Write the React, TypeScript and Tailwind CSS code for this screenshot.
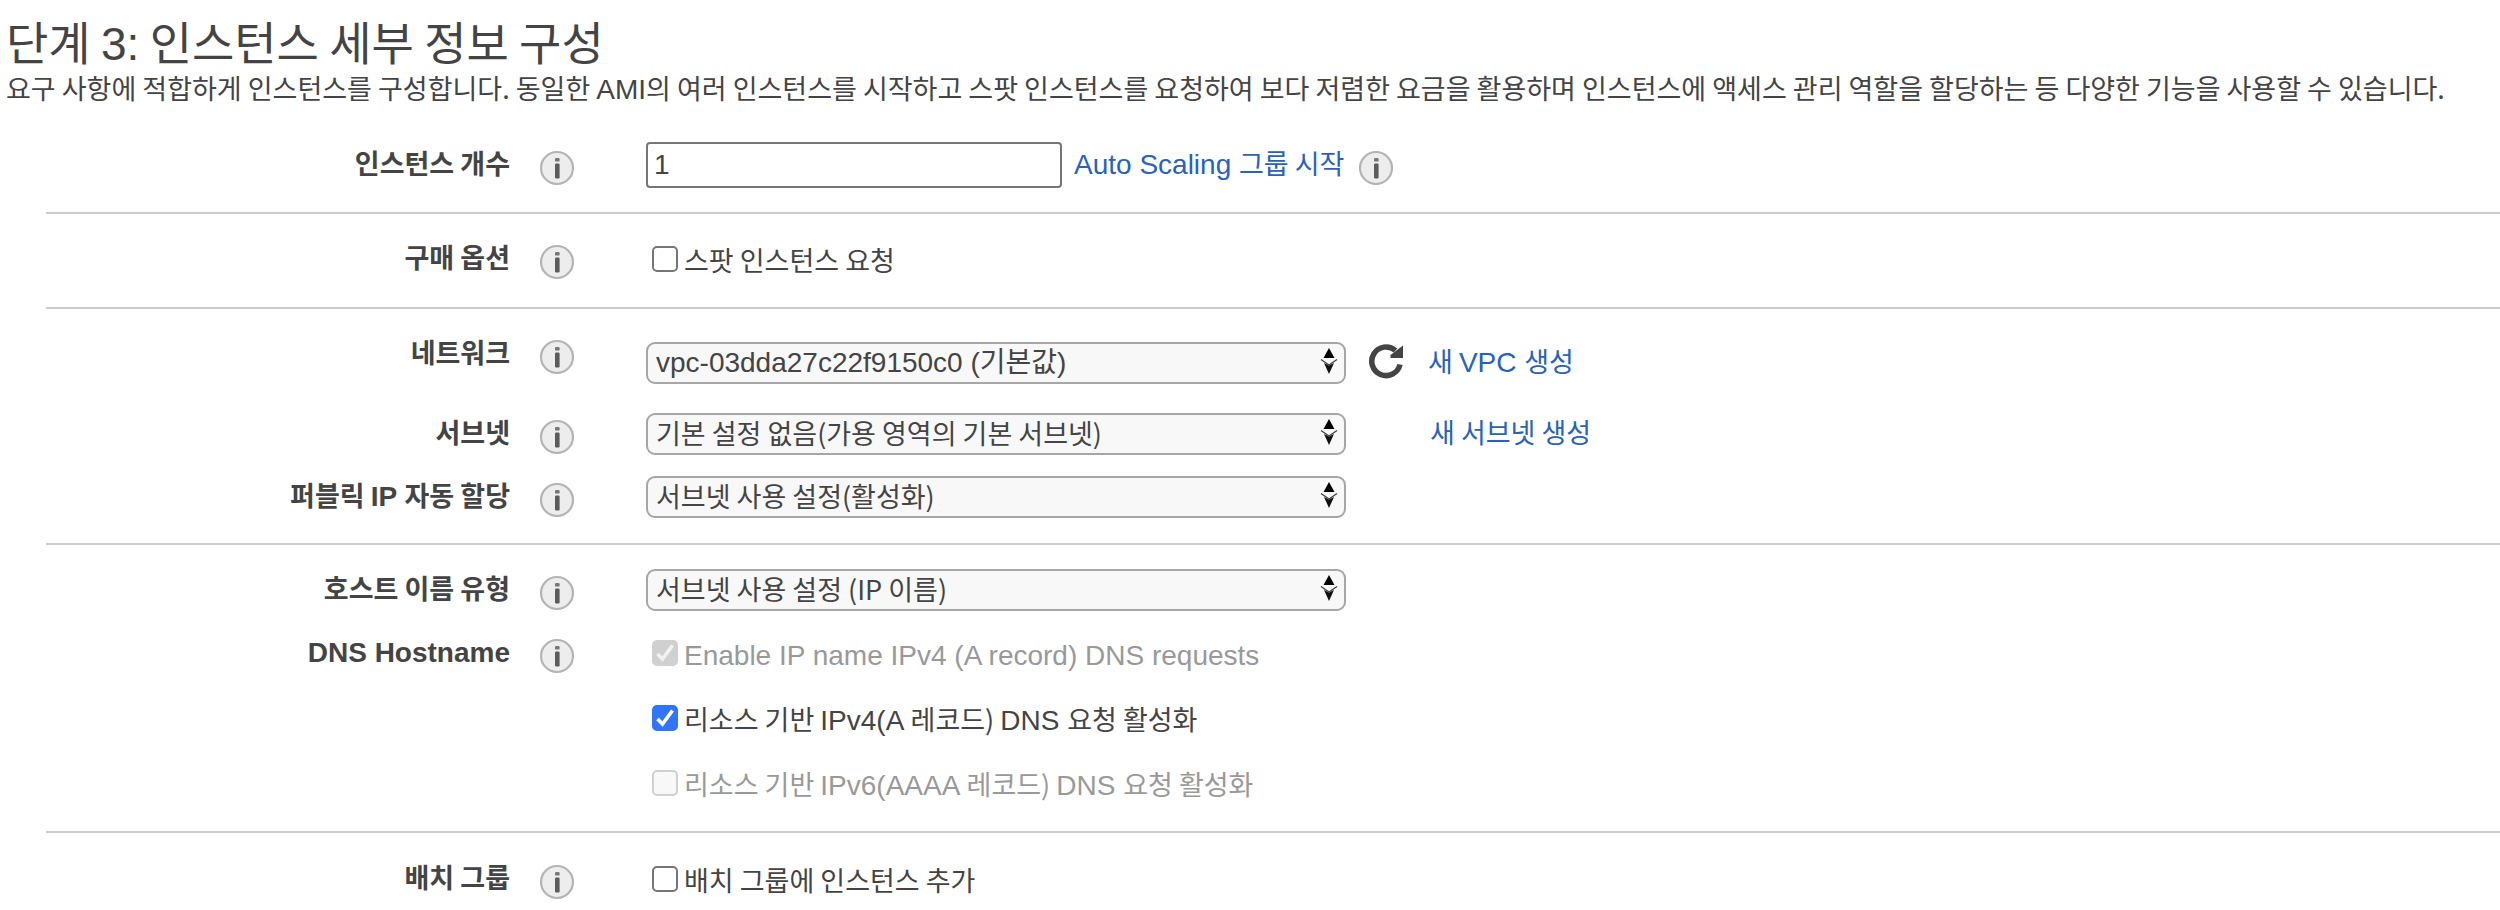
import { useState, type ReactNode } from "react";
import { clsx } from "clsx";

export default function App() {
  return (
    <main className="min-h-screen overflow-x-hidden bg-white text-[27px] leading-9 text-[#444] font-['Noto_Sans_CJK_KR','Liberation_Sans',sans-serif]">
      <header className="px-1.5 pt-2.5">
        <h1 className="text-[46px] leading-[60px]">
          단계 <span className="font-['Liberation_Sans',sans-serif] leading-none">3:</span> 인스턴스 세부 정보 구성
        </h1>
        <p>
          <Mixed text="요구 사항에 적합하게 인스턴스를 구성합니다. 동일한 AMI의 여러 인스턴스를 시작하고 스팟 인스턴스를 요청하여 보다 저렴한 요금을 활용하며 인스턴스에 액세스 관리 역할을 할당하는 등 다양한 기능을 사용할 수 있습니다." />
        </p>
      </header>
      <InstanceForm />
    </main>
  );
}

function InstanceForm() {
  const [count, setCount] = useState("1");

  return (
    <form className="ml-[46px]" onSubmit={(e) => e.preventDefault()}>
      <section className="border-b-2 border-[#ccc] pt-9 pb-6">
        <Row label="인스턴스 개수" htmlFor="count">
          <input
            id="count"
            type="text"
            value={count}
            onChange={(e) => setCount(e.target.value)}
            className="h-[46px] w-[416px] rounded-[4px] border-2 border-[#767676] bg-white px-1.5 text-[28px] font-['Liberation_Sans',sans-serif]"
          />
          <Link text="Auto Scaling 그룹 시작" className="ml-3" />
          <InfoButton label="Auto Scaling 그룹 시작" className="ml-[14px]" />
        </Row>
      </section>

      <section className="border-b-2 border-[#ccc] pt-6 pb-[27px]">
        <Row label="구매 옵션">
          <Checkbox id="spot" label="스팟 인스턴스 요청" />
        </Row>
      </section>

      <section className="border-b-2 border-[#ccc] pt-[15px] pb-[25px]">
        <Row label="네트워크" htmlFor="network">
          <div className="flex items-center pt-[18px]">
            <Select id="network" value="vpc-03dda27c22f9150c0 (기본값)" latin />
            <button type="button" aria-label="새로 고침" className="ml-[22px] -mt-1">
              <RefreshIcon />
            </button>
            <Link text="새 VPC 생성" className="ml-6" />
          </div>
        </Row>
        <Row label="서브넷" htmlFor="subnet" className="mt-[29px]">
          <Select id="subnet" value="기본 설정 없음(가용 영역의 기본 서브넷)" />
          <Link text="새 서브넷 생성" className="ml-[84px]" />
        </Row>
        <Row label="퍼블릭 IP 자동 할당" htmlFor="public-ip" className="mt-[21px]">
          <Select id="public-ip" value="서브넷 사용 설정(활성화)" />
        </Row>
      </section>

      <section className="border-b-2 border-[#ccc] pt-6 pb-[27px]">
        <Row label="호스트 이름 유형" htmlFor="host-type">
          <Select id="host-type" value="서브넷 사용 설정 (IP 이름)" />
        </Row>
        <Row label="DNS Hostname" className="mt-[21px]">
          <Checkbox id="dns-name" label="Enable IP name IPv4 (A record) DNS requests" checked disabled />
        </Row>
        <div className="mt-[23px] flex flex-col gap-[23px] pl-[600px]">
          <Checkbox id="dns-a" label="리소스 기반 IPv4(A 레코드) DNS 요청 활성화" checked />
          <Checkbox id="dns-aaaa" label="리소스 기반 IPv6(AAAA 레코드) DNS 요청 활성화" disabled />
        </div>
      </section>

      <section className="pt-[25px]">
        <Row label="배치 그룹">
          <Checkbox id="placement" label="배치 그룹에 인스턴스 추가" />
        </Row>
      </section>
    </form>
  );
}

// Sets the Latin runs of a Korean string in the Latin face
function Mixed({ text }: { text: string }) {
  return text.split(/([A-Za-z0-9][A-Za-z0-9() ]*)/).map((part, i) =>
    i % 2 ? (
      <span key={i} className="text-[28px] leading-none font-['Liberation_Sans',sans-serif]">
        {part}
      </span>
    ) : (
      part
    ),
  );
}

type RowProps = {
  label: string;
  htmlFor?: string;
  className?: string;
  children: ReactNode;
};

function Row({ label, htmlFor, className, children }: RowProps) {
  const labelClass = "w-[464px] shrink-0 pb-1 text-right font-bold";

  return (
    <div className={clsx("flex items-center", className)}>
      {htmlFor ? (
        <label htmlFor={htmlFor} className={labelClass}>
          <Mixed text={label} />
        </label>
      ) : (
        <span className={labelClass}>
          <Mixed text={label} />
        </span>
      )}
      <InfoButton label={label} className="ml-[29px]" />
      <div className="ml-[71px] flex items-center whitespace-nowrap">{children}</div>
    </div>
  );
}

function InfoButton({ label, className }: { label: string; className?: string }) {
  return (
    <button type="button" aria-label={`${label} 정보`} className={clsx("mt-1.5 shrink-0", className)}>
      <svg width="36" height="36" viewBox="0 0 36 36" aria-hidden="true">
        <circle cx="18" cy="18" r="16" fill="#ededed" stroke="#b4b4b4" strokeWidth="2.2" />
        <rect x="16" y="8" width="4.6" height="3.6" rx="1.2" fill="#777" />
        <rect x="16" y="13.5" width="4.6" height="15" rx="1.2" fill="#5c5c5c" />
      </svg>
    </button>
  );
}

function Link({ text, className }: { text: string; className?: string }) {
  return (
    <a href="#" className={clsx("pb-1 text-[#2962b8]", className)}>
      <Mixed text={text} />
    </a>
  );
}

function Select({ id, value, latin = false }: { id: string; value: string; latin?: boolean }) {
  return (
    <div className="relative">
      <select
        id={id}
        defaultValue={value}
        className={clsx(
          "block h-[42px] w-[700px] appearance-none rounded-[9px] border-2 border-[#a6a6a6] bg-[#f8f8f8] px-2",
          latin
            ? "text-[28px] font-['Liberation_Sans','Noto_Sans_CJK_KR',sans-serif]"
            : "pb-1",
        )}
      >
        <option>{value}</option>
      </select>
      <svg
        className="pointer-events-none absolute top-1.5 right-2"
        width="18"
        height="27"
        viewBox="0 0 18 27"
        aria-hidden="true"
      >
        <path d="M9 0 L14.5 10 H3.5 Z" fill="#000" />
        <path d="M4 15 L9 17.5 L14 15 L9 26 Z" fill="#111" />
        <path d="M1 11.5 L9 17 L17 11.5" fill="none" stroke="#444" strokeWidth="1.4" />
      </svg>
    </div>
  );
}

type CheckboxProps = {
  id: string;
  label: string;
  checked?: boolean;
  disabled?: boolean;
};

function Checkbox({ id, label, checked = false, disabled = false }: CheckboxProps) {
  const [on, setOn] = useState(checked);

  return (
    <div className="flex h-[42px] items-center pl-1.5">
      <span className="relative block size-[26px]">
        <input
          id={id}
          type="checkbox"
          checked={on}
          disabled={disabled}
          onChange={(e) => setOn(e.target.checked)}
          className="block size-[26px] appearance-none rounded-[5px] border-2 border-[#767676] bg-white checked:border-[#3174f6] checked:bg-[#3174f6] disabled:border-[#d0d0d0] disabled:bg-[#f8f8f8] disabled:checked:border-[#d0d0d0] disabled:checked:bg-[#d0d0d0]"
        />
        {on && (
          <svg
            className={clsx(
              "pointer-events-none absolute inset-0",
              disabled ? "text-[#f2f2f2]" : "text-white",
            )}
            viewBox="0 0 26 26"
            aria-hidden="true"
          >
            <path d="M5.5 14 L10.5 19 L20.5 5.5" fill="none" stroke="currentColor" strokeWidth="3.6" />
          </svg>
        )}
      </span>
      <label htmlFor={id} className={clsx("mt-0.5 ml-1.5", disabled && "text-[#999]")}>
        <Mixed text={label} />
      </label>
    </div>
  );
}

function RefreshIcon() {
  return (
    <svg width="36" height="36" viewBox="0 0 36 36" aria-hidden="true">
      <path d="M32 21.5 A14.3 14.3 0 1 1 27.5 7.5" fill="none" stroke="#444" strokeWidth="5.5" />
      <path d="M35 2.5 V15 H22.5 V12 Z" fill="#444" />
    </svg>
  );
}
